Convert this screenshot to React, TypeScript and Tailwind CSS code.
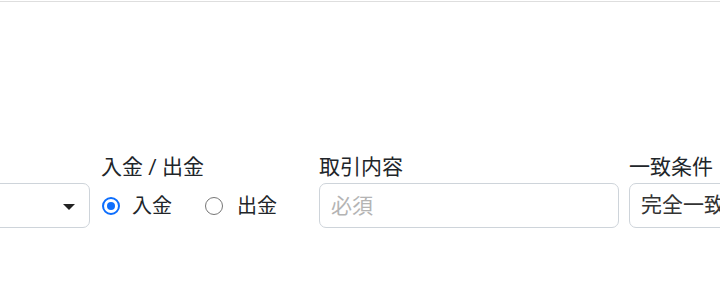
export default function App() {
  return (
    <div
      className="w-[720px] h-[290px] overflow-hidden bg-white text-[#212529]"
      style={{ fontFamily: 'Roboto, "Noto Sans CJK JP", sans-serif' }}
    >
      <div className="pt-px">
        <div className="h-px bg-[#dedede]" />
      </div>

      <div className="flex items-start pt-[150px]">
        {/* 口座 select (mostly off to the left) */}
        <div className="w-[200px] -ml-[110px] shrink-0">
          <div className="h-[30px] mb-px" />
          <div className="relative h-[45px] rounded-[7px] border border-[#ced4da] bg-white">
            <svg
              className="absolute right-[14px] top-[20px]"
              width="12"
              height="6"
              viewBox="0 0 12 6"
            >
              <path d="M0 0 L12 0 L6 6 Z" fill="#222" />
            </svg>
          </div>
        </div>

        {/* 入金 / 出金 */}
        <div className="w-[208px] ml-[11px] shrink-0">
          <div className="h-[30px] leading-[30px] text-[21px] mb-px">入金 / 出金</div>
          <div className="h-[45px] flex items-center text-[20px]">
            <label className="flex items-center">
              <span className="ml-px w-[18px] h-[18px] rounded-full border-[2px] border-[#0d6efd] flex items-center justify-center">
                <span className="w-[8px] h-[8px] rounded-full bg-[#0d6efd]" />
              </span>
              <span className="ml-[12px]">入金</span>
            </label>
            <label className="flex items-center ml-[33px]">
              <span className="w-[18px] h-[18px] rounded-full border-[1.5px] border-[#767676]" />
              <span className="ml-[14px]">出金</span>
            </label>
          </div>
        </div>

        {/* 取引内容 */}
        <div className="w-[300px] ml-[10px] shrink-0">
          <div className="h-[30px] leading-[30px] text-[21px] mb-px">取引内容</div>
          <input
            className="w-full h-[45px] rounded-[7px] border border-[#ced4da] px-[11px] text-[21px] placeholder:text-[#b4b4b4] outline-none"
            placeholder="必須"
          />
        </div>

        {/* 一致条件 */}
        <div className="w-[200px] ml-[10px] shrink-0">
          <div className="h-[30px] leading-[30px] text-[21px] mb-px">一致条件</div>
          <div className="h-[45px] rounded-[7px] border border-[#ced4da] px-[11px] flex items-center text-[21px] text-[#333]">
            完全一致
          </div>
        </div>
      </div>
    </div>
  );
}
